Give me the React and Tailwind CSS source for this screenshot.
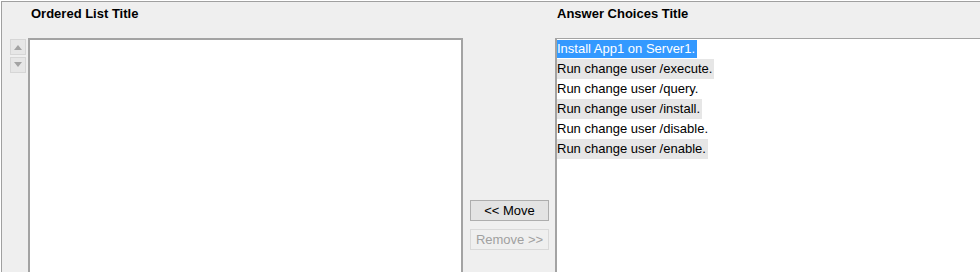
import { useState } from "react";

const choices = [
  "Install App1 on Server1.",
  "Run change user /execute.",
  "Run change user /query.",
  "Run change user /install.",
  "Run change user /disable.",
  "Run change user /enable.",
];

const Arrow = ({ up }) => (
  <div className="flex h-4 w-4 items-center justify-center border border-[#d6d6d6] bg-[#e6e6e6]">
    <svg width="10" height="6" viewBox="0 0 10 6">
      <path d={up ? "M1 6 L5 1 L9 6 Z" : "M1 0 L5 5 L9 0 Z"} fill="#a3a3a3" />
    </svg>
  </div>
);

export default function App() {
  const [selected] = useState(0);

  return (
    <div className="h-[272px] w-[980px] overflow-hidden bg-white pl-px pt-px font-['Liberation_Sans',Arial,sans-serif]">
      <div className="flex h-[300px] border-l border-t border-[#a0a0a0] bg-[#efefef]">
        <div className="flex w-[26px] flex-col gap-[2px] pl-[8px] pt-[37px]">
          <Arrow up />
          <Arrow />
        </div>

        <div className="flex w-[435px] flex-col">
          <div className="h-[36px] pl-[3px] pt-[2px] text-[13px] font-bold text-black">Ordered List Title</div>
          <div className="flex-1 border-2 border-[#a3a3a3] bg-white"></div>
        </div>

        <div className="flex w-[92px] flex-col gap-[8px] pl-[7px] pt-[198px]">
          <button className="h-[21px] w-[79px] border border-[#adadad] bg-[#e3e3e3] text-[13px] text-black">&lt;&lt; Move</button>
          <button disabled className="h-[21px] w-[79px] border border-[#d9d9d9] bg-[#efefef] text-[13px] text-[#a0a0a0]">Remove &gt;&gt;</button>
        </div>

        <div className="flex flex-1 flex-col">
          <div className="h-[36px] pl-[2px] pt-[2px] text-[13px] font-bold text-black">Answer Choices Title</div>
          <div className="flex-1 border-2 border-r-0 border-t-[1px] border-[#a3a3a3] bg-white text-[13px] leading-[20px] text-black">
            {choices.map((c, i) => (
              <div key={c} className="h-[20px]">
                {i === selected ? (
                  <span className="mt-px inline-block h-[18px] bg-[#3399ff] pr-[2px] align-top leading-[18px] text-white">{c}</span>
                ) : (
                  <span className={`inline-block pr-[2px] align-top ${i % 2 === 1 ? "bg-[#e6e6e6]" : ""}`}>{c}</span>
                )}
              </div>
            ))}
          </div>
        </div>
      </div>
    </div>
  );
}
